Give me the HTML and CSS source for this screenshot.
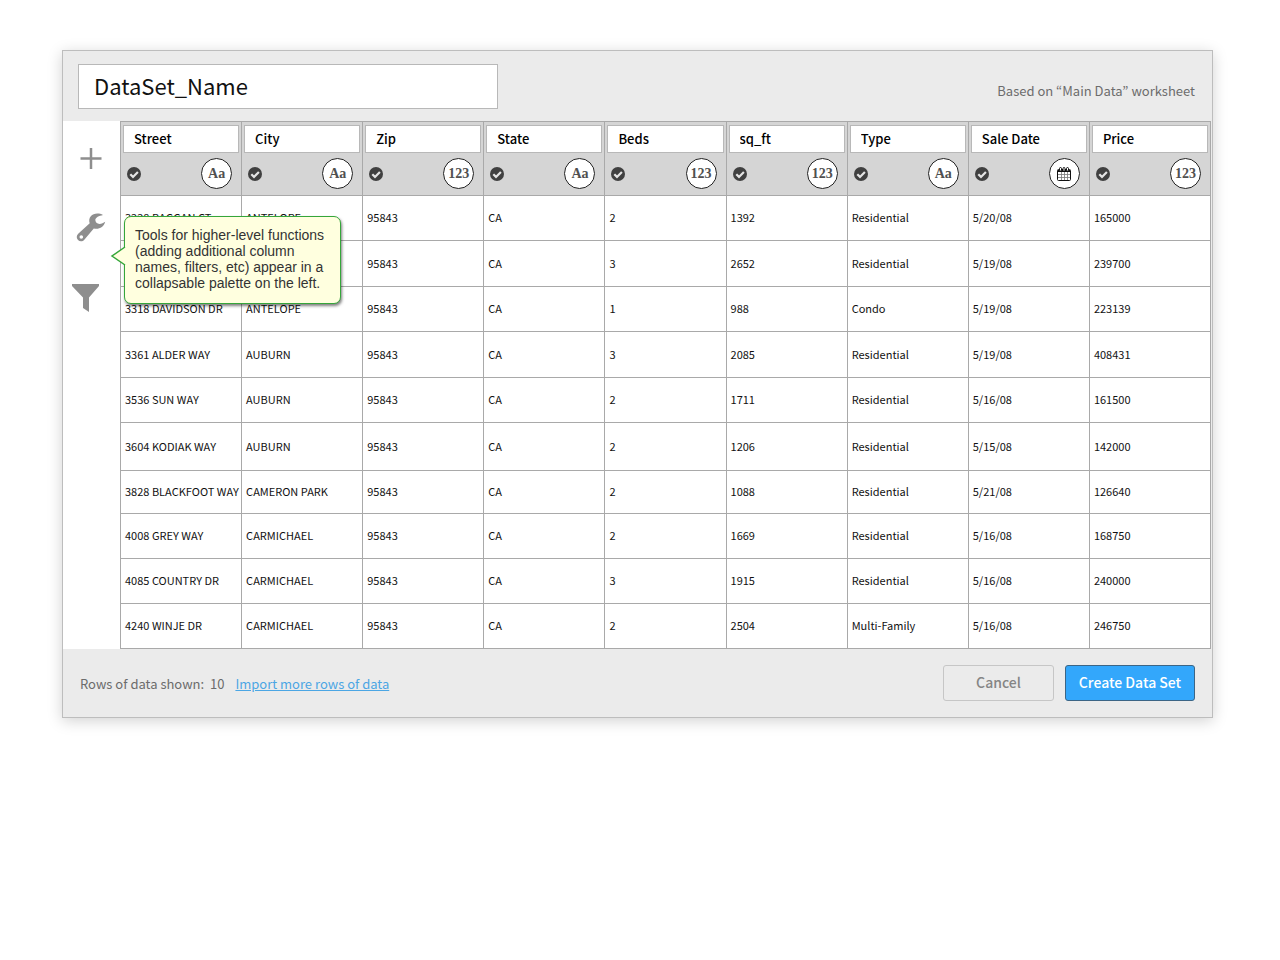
FILE: index.html
```html
<!DOCTYPE html>
<html lang="en">
<head>
  <meta charset="UTF-8" />
  <meta name="viewport" content="width=device-width, initial-scale=1.0" />
  <title>Create Data Set</title>
  <link rel="stylesheet" href="styles.css">
</head>
<body>
  <main class="dialog">
    <header class="dialog-header">
      <input class="dataset-name" type="text" value="DataSet_Name" aria-label="Data set name" />
      <span class="source">Based on “Main Data” worksheet</span>
    </header>

    <div class="workspace">
      <nav class="palette" aria-label="Tools">
        <button class="tool" aria-label="Add column">
          <svg viewBox="0 0 40 28" width="40" height="28"><path d="M20 4v21M9.500 14.500h21" stroke="currentColor" stroke-width="2.500" fill="none" /></svg>
        </button>
        <button class="tool" aria-label="Settings">
          <svg viewBox="0 0 40 28" width="40" height="28"><path fill-rule="evenodd" fill="currentColor" d="M32 1C28-1.200 22.500-1 19.800 2.200c-1.700 2-1.900 4.600-1.100 7L7.200 19.800c-1.900 1.800-1.900 4.600-.2 6.300 1.800 1.700 4.600 1.600 6.300-.3l9.500-11.300c5 1.200 10.200-1.300 11.400-6.700-1.700 1-3.600 2.200-5.700 2.300-2.400-.2-4.300-2-4.200-4.300C24.700 3.300 27.800 2 32 1zM10.300 21.200a1.800 1.800 0 1 1 0 3.600 1.800 1.800 0 0 1 0-3.600z" /></svg>
        </button>
        <button class="tool" aria-label="Filter">
          <svg viewBox="0 0 40 28" width="40" height="28"><path fill="currentColor" d="M1 0h27v2L18 13.500V28l-6-4V13.500L1 2z" /></svg>
        </button>
      </nav>

      <table class="data">
        <thead><tr id="columns"></tr></thead>
        <tbody id="rows"></tbody>
      </table>

      <div class="tooltip" role="note">
        <svg class="tooltip-tail" viewBox="0 0 16 20" width="16" height="20"><path d="M15 1L2 10l13 9" fill="#ffffdf" stroke="#35a63a" stroke-width="1.500" /></svg>
        Tools for higher-level functions (adding additional column names, filters, etc) appear in a collapsable palette on the left.
      </div>
    </div>

    <footer class="dialog-footer">
      <span class="row-count">Rows of data shown:&nbsp; 10</span>
      <a class="import-link" href="#">Import more rows of data</a>
      <button class="btn btn-cancel">Cancel</button>
      <button class="btn btn-create">Create Data Set</button>
    </footer>
  </main>

  <script>
    const columns = [
      ["Street", "text"], ["City", "text"], ["Zip", "number"],
      ["State", "text"], ["Beds", "number"], ["sq_ft", "number"],
      ["Type", "text"], ["Sale Date", "date"], ["Price", "number"]
    ];

    const rows = [
      ["3228 BAGGAN CT", "ANTELOPE", "95843", "CA", "2", "1392", "Residential", "5/20/08", "165000"],
      ["", "", "95843", "CA", "3", "2652", "Residential", "5/19/08", "239700"],
      ["3318 DAVIDSON DR", "ANTELOPE", "95843", "CA", "1", "988", "Condo", "5/19/08", "223139"],
      ["3361 ALDER WAY", "AUBURN", "95843", "CA", "3", "2085", "Residential", "5/19/08", "408431"],
      ["3536 SUN WAY", "AUBURN", "95843", "CA", "2", "1711", "Residential", "5/16/08", "161500"],
      ["3604 KODIAK WAY", "AUBURN", "95843", "CA", "2", "1206", "Residential", "5/15/08", "142000"],
      ["3828 BLACKFOOT WAY", "CAMERON PARK", "95843", "CA", "2", "1088", "Residential", "5/21/08", "126640"],
      ["4008 GREY WAY", "CARMICHAEL", "95843", "CA", "2", "1669", "Residential", "5/16/08", "168750"],
      ["4085 COUNTRY DR", "CARMICHAEL", "95843", "CA", "3", "1915", "Residential", "5/16/08", "240000"],
      ["4240 WINJE DR", "CARMICHAEL", "95843", "CA", "2", "2504", "Multi-Family", "5/16/08", "246750"]
    ];

    const calendar = `<svg viewBox="0 0 14 14" width="14" height="14">
      <rect x=".5" y="2.500" width="13" height="11" rx="1" fill="#fff" stroke="#111" />
      <path d="M1 4h12" stroke="#111" stroke-width="2" />
      <path d="M4.500 5v8M7.500 5v8M10.500 5v8M1 7.500h12M1 10.500h12" stroke="#777" stroke-width=".8" />
      <path d="M2.500 3.500V1.500a1 1 0 0 1 2 0v2M6 3.500V1.500a1 1 0 0 1 2 0v2M9.500 3.500V1.500a1 1 0 0 1 2 0v2" stroke="#111" fill="#fff" />
    </svg>`;
    const typeLabels = { text: "Aa", number: "123", date: calendar };

    document.getElementById("columns").innerHTML = columns.map(([name, type]) => `
      <th scope="col">
        <input class="column-name" type="text" value="${name}" aria-label="${name} column name" />
        <div class="column-tools">
          <label class="check">
            <input type="checkbox" checked aria-label="Include ${name}" />
            <svg viewBox="0 0 14 14" width="14" height="14"><circle cx="7" cy="7" r="7" fill="#404040" /><path d="M3.300 7.200l2.700 2.700 4.900-5" fill="none" stroke="#e4e4e4" stroke-width="2.200" /></svg>
          </label>
          <button class="type" aria-label="${name} type: ${type}">${typeLabels[type]}</button>
        </div>
      </th>`).join("");

    document.getElementById("rows").innerHTML = rows.map(row =>
      `<tr>${row.map(value => `<td>${value}</td>`).join("")}</tr>`).join("");
  </script>
</body>
</html>
```
FILE: styles.css
```css
:root {
  --panel: #ebebeb;
  --head: #d5d5d5;
  --line: #a9a9a9;
  --box-line: #b8b8b8;
  --muted: #6c6c6c;
  --ui-font: "Noto Sans CJK KR", "Open Sans", sans-serif;
}
* {
  box-sizing: border-box;
}
body {
  margin: 0;
  padding: 50px 67px 50px 62px;
  background: #fff;
  font-family: var(--ui-font);
  font-size: 13px;
}
button,
input {
  font-family: inherit;
  margin: 0;
}
button {
  cursor: pointer;
}
.dialog {
  background: var(--panel);
  border: 1px solid #bdbdbd;
  box-shadow: 0 3px 14px rgba(0, 0, 0, 0.18);
}

/* Header */
.dialog-header {
  display: flex;
  align-items: center;
  justify-content: space-between;
  padding: 13px 17px 12px 15px;
}
.dataset-name {
  width: 420px;
  height: 45px;
  padding: 0 15px 4px;
  border: 1px solid var(--box-line);
  background: #fff;
  color: #111;
  font-size: 22px;
}
.source {
  padding-top: 8px;
  color: var(--muted);
}

/* Tools and data */
.workspace {
  position: relative;
  display: flex;
  padding-right: 1px;
}
.palette {
  flex: 0 0 57px;
  display: flex;
  flex-direction: column;
  align-items: center;
  gap: 42px;
  padding: 23px 2px 0 0;
  background: #fff;
}
.tool {
  width: 40px;
  height: 28px;
  padding: 0;
  border: none;
  background: none;
  color: #8e8e8e;
}
.tool svg {
  display: block;
  overflow: visible;
}
.data {
  flex: 1;
  width: 100%;
  table-layout: fixed;
  border-collapse: collapse;
  background: #fff;
}
.data th,
.data td {
  border: 1px solid var(--line);
}
.data th {
  padding: 3px 2px 6px;
  background: var(--head);
  font-weight: normal;
}
.column-name {
  display: block;
  width: 100%;
  height: 28px;
  padding: 0 10px 2px;
  border: 1px solid var(--box-line);
  background: #fff;
  color: #000;
  font-size: 13px;
  font-weight: 500;
}
.column-tools {
  display: flex;
  align-items: center;
  justify-content: space-between;
  padding: 5px 7px 0 4px;
}
.check {
  position: relative;
  cursor: pointer;
}
.check input {
  position: absolute;
  inset: 0;
  opacity: 0;
}
.check svg {
  display: block;
}
.check input:not(:checked) + svg {
  opacity: 0.3;
}
.type {
  display: flex;
  align-items: center;
  justify-content: center;
  width: 31px;
  height: 31px;
  padding: 0;
  border: 1px solid #222;
  border-radius: 50%;
  background: #fff;
  color: #505050;
  font-family: "Liberation Serif", serif;
  font-size: 14px;
  font-weight: bold;
}
.data td {
  height: 45px;
  padding: 0 4px 2px;
  font-size: 11px;
  color: #111;
  white-space: nowrap;
}
.data tr:nth-child(even) td {
  height: 46px;
}
.data tbody tr:nth-child(6) td {
  height: 48px;
}
.data tbody tr:nth-child(7) td {
  height: 43px;
}
.data tbody tr:nth-child(n + 8) td {
  height: 45px;
}

.tooltip {
  position: absolute;
  top: 95px;
  left: 61px;
  width: 217px;
  padding: 10px 8px 12px 10px;
  border: 1px solid #35a63a;
  border-radius: 7px;
  background: #ffffdf;
  box-shadow: 1px 2px 3px rgba(0, 0, 0, 0.5);
  color: #333;
  font-family: "Liberation Sans", Arial, sans-serif;
  font-size: 14px;
  line-height: 16px;
}
.tooltip-tail {
  position: absolute;
  top: 29px;
  left: -15px;
}

/* Footer */
.dialog-footer {
  display: flex;
  align-items: center;
  gap: 11px;
  padding: 16px 17px;
}
.row-count {
  color: var(--muted);
}
.import-link {
  margin-right: auto;
  color: #4ba6e4;
}
.btn {
  height: 36px;
  padding: 0 12px 2px;
  border-radius: 3px;
  font-size: 14px;
  font-weight: 500;
}
.btn-cancel {
  min-width: 111px;
  border: 1px solid #c6c6c6;
  background: var(--panel);
  color: #858585;
}
.btn-create {
  min-width: 130px;
  border: 1px solid #3c6585;
  background: #33a7fb;
  color: #fff;
}
```
